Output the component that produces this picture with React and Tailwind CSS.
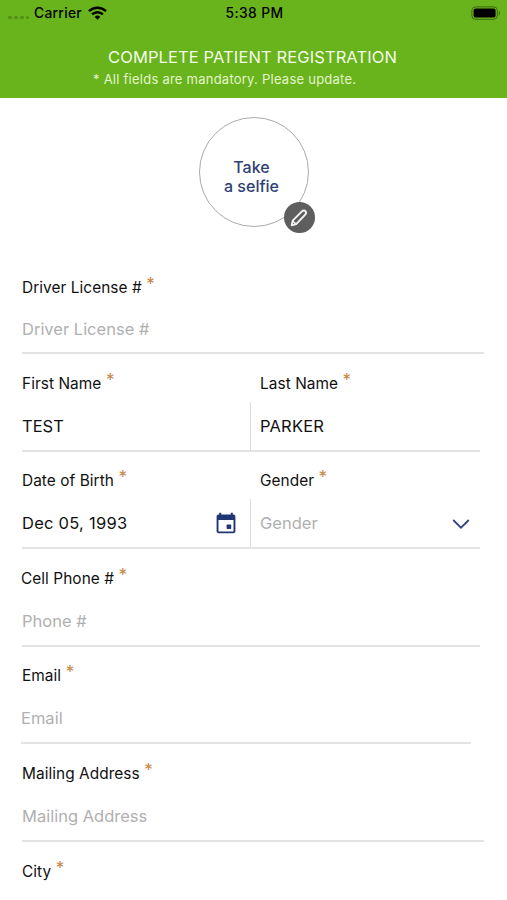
const StatusBar = () => (
  <div className="flex h-[26px] items-center pr-[6px] pl-2 text-[13.8px] font-medium text-black">
    <div className="flex flex-1 items-center">
      <div className="mt-[8px] mr-[5px] flex gap-[2px]">
        <span className="h-[3px] w-[4px] rounded-full bg-black/20"></span>
        <span className="h-[3px] w-[4px] rounded-full bg-black/20"></span>
        <span className="h-[3px] w-[4px] rounded-full bg-black/20"></span>
        <span className="h-[3px] w-[3px] rounded-full bg-black/20"></span>
      </div>
      <span className="mt-px tracking-[0.3px]">Carrier</span>
      <svg className="ml-[6px] h-[14px] w-[19px]" viewBox="0 0 19 14">
        <g fill="none" stroke="#000" strokeWidth="2.4">
          <path d="M1 5.2a12.2 12.2 0 0 1 17 0" />
          <path d="M4.1 8.4a7.7 7.7 0 0 1 10.8 0" />
        </g>
        <path d="M9.5 13.8 6.7 10.9a4 4 0 0 1 5.6 0z" />
      </svg>
    </div>
    <span className="mt-px tracking-[0.4px]">5:38 PM</span>
    <div className="flex flex-1 justify-end">
      <svg className="h-[14px] w-[30px]" viewBox="0 0 30 14">
        <rect x="0.9" y="0.9" width="25.4" height="12.4" rx="3.6" fill="none" stroke="#000" strokeOpacity="0.4" />
        <rect x="2.6" y="2.6" width="22" height="9" rx="2.2" />
        <path d="M27.8 5v4.4c1.6-.8 1.6-3.6 0-4.4z" fillOpacity="0.4" />
      </svg>
    </div>
  </div>
);

const Header = () => (
  <header className="h-[98px] bg-[#69b31c]">
    <StatusBar />
    <h1 className="mt-[20px] ml-[108px] text-[16.5px] leading-[22px] tracking-[0.11px] whitespace-nowrap text-[#f4fbe9]">
      COMPLETE PATIENT REGISTRATION
    </h1>
    <p className="ml-[93px] text-[13px] leading-[22px] tracking-[0.24px] whitespace-nowrap text-[#e4f5cb]">
      * All fields are mandatory. Please update.
    </p>
  </header>
);

const Selfie = () => (
  <div className="mt-[19px] flex justify-center">
    <button className="relative h-[110px] w-[110px] rounded-full border border-[#a9a9a9] pt-[10px] pr-[4px] text-[16px] leading-[19px] font-medium text-[#2f3f76]">
      Take
      <br />a selfie
      <span className="absolute top-[84px] left-[84px] flex h-[31px] w-[31px] items-center justify-center rounded-full bg-[#5e5e5e]">
        <svg className="h-[18px] w-[18px]" viewBox="0 0 18 18" fill="none" stroke="#f2f2f2" strokeWidth="1.9" strokeLinejoin="round">
          <path d="M1.7 16.3 2.7 11.6 11.9 2.4c1.2-1.2 2.6-1.2 3.5-.2s.9 2.3-.2 3.5L6.2 15.1z" />
          <path d="M2.6 12 6 15.2" strokeWidth="1.6" />
        </svg>
      </span>
    </button>
  </div>
);

const CalendarIcon = () => (
  <svg className="mb-[2px] h-[22px] w-[20px]" viewBox="0 0 20 22" fill="#203672">
    <path
      fillRule="evenodd"
      d="M3.2.7h2v1.8h9.6V.7h2v1.8h.6c1.1 0 2 .9 2 2v14.8c0 1.1-.9 2-2 2H2.6c-1.1 0-2-.9-2-2V4.5c0-1.1.9-2 2-2h.6zM2.5 8v11.4h15V8z"
    />
    <rect x="10.6" y="12.4" width="4.6" height="4.6" rx="0.8" />
  </svg>
);

const ChevronIcon = () => (
  <svg className="h-[10px] w-[18px]" viewBox="0 0 18 10" fill="none" stroke="#35467f" strokeWidth="1.8">
    <path d="M1.2 1 9 8.7 16.8 1" />
  </svg>
);

// Label with the required mark after it
const Label = ({ text, className = "h-[47.5px] pt-[19.5px]" }) => (
  <label className={`flex text-[15.4px] leading-[20px] tracking-[0.06px] text-[#111] ${className}`}>
    {text}
    <span className="-mt-[4px] ml-[4.5px] text-[17px] leading-[20px] text-[#c58443]">*</span>
  </label>
);

const Value = ({ value, placeholder, className = "pt-px", children }) => (
  <div className={`flex h-[48px] items-center justify-between text-[16.5px] ${className}`}>
    <span className={value ? "text-[#111]" : "text-[#b0b0b0]"}>{value || placeholder}</span>
    {children}
  </div>
);

const line = "border-b-2 border-[#e3e3e3]";

function App() {
  return (
    <div className="h-[900px] w-[507px] overflow-hidden bg-white font-['Inter','Liberation_Sans',sans-serif]">
      <Header />
      <Selfie />

      <form className="mt-[29px] pl-[22px]">
        <div className={`w-[462px] ${line}`}>
          <Label text="Driver License #" className="h-[48px] pt-[22px]" />
          <Value placeholder="Driver License #" className="pt-[3px]" />
        </div>

        <div className={`flex w-[458px] ${line}`}>
          <div className="w-[228px]">
            <Label text="First Name" />
            <Value value="TEST" />
          </div>
          <div className="flex-1">
            <Label text="Last Name" className="h-[47.5px] pt-[19.5px] pl-[10px]" />
            <Value value="PARKER" className="border-l border-[#dcdcdc] pt-px pl-[9px] tracking-[0.2px]" />
          </div>
        </div>

        <div className={`flex w-[458px] ${line}`}>
          <div className="w-[228px]">
            <Label text="Date of Birth" />
            <Value value="Dec 05, 1993" className="pt-px pr-[14px] tracking-[0.25px]">
              <CalendarIcon />
            </Value>
          </div>
          <div className="flex-1">
            <Label text="Gender" className="h-[47.5px] pt-[19.5px] pl-[10px]" />
            <Value placeholder="Gender" className="border-l border-[#dcdcdc] pt-px pr-[10px] pl-[9px]">
              <ChevronIcon />
            </Value>
          </div>
        </div>

        <div className={`w-[458px] ${line}`}>
          <Label text="Cell Phone #" className="-ml-px h-[47.5px] pt-[19.5px]" />
          <Value placeholder="Phone #" />
        </div>

        <div className={`-ml-px w-[450px] ${line}`}>
          <Label text="Email" className="h-[47.5px] pt-[19.5px] pl-px" />
          <Value placeholder="Email" />
        </div>

        <div className={`w-[462px] ${line}`}>
          <Label text="Mailing Address" />
          <Value placeholder="Mailing Address" />
        </div>

        <Label text="City" className="h-[48px] pt-5" />
      </form>
    </div>
  );
}

export default App;
